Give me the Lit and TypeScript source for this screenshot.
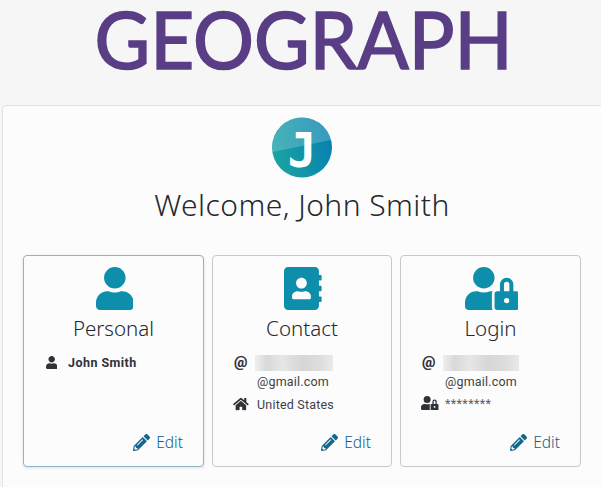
import { LitElement, html, css, svg } from "lit";
import { customElement } from "lit/decorators.js";

const USER = svg`<path d="M224 256c70.7 0 128-57.3 128-128S294.7 0 224 0 96 57.3 96 128s57.3 128 128 128zm89.6 32h-16.7c-22.2 10.2-46.9 16-72.9 16s-50.6-5.8-72.9-16h-16.7C60.2 288 0 348.2 0 422.4V464c0 26.5 21.5 48 48 48h352c26.5 0 48-21.5 48-48v-41.6c0-74.2-60.2-134.4-134.4-134.4z"/>`;
const BOOK = svg`<path d="M436 160c6.6 0 12-5.4 12-12v-40c0-6.6-5.4-12-12-12h-20V48c0-26.5-21.5-48-48-48H48C21.5 0 0 21.5 0 48v416c0 26.5 21.5 48 48 48h320c26.5 0 48-21.5 48-48v-48h20c6.6 0 12-5.4 12-12v-40c0-6.6-5.4-12-12-12h-20v-64h20c6.6 0 12-5.4 12-12v-40c0-6.6-5.4-12-12-12h-20v-64h20zm-228-32c35.3 0 64 28.7 64 64s-28.7 64-64 64-64-28.7-64-64 28.7-64 64-64zm112 236.8c0 10.6-10 19.2-22.4 19.2H118.4C106 384 96 375.4 96 364.8v-19.2c0-31.8 30.1-57.6 67.2-57.6h5c12.3 5.1 25.7 8 39.8 8s27.6-2.9 39.8-8h5c37.1 0 67.2 25.8 67.2 57.6v19.2z"/>`;
const LOCK = svg`<path d="M224 256A128 128 0 1 0 96 128a128 128 0 0 0 128 128zm96 64a63.08 63.08 0 0 1 8.1-30.5c-4.8-.5-9.5-1.5-14.5-1.5h-16.7a174.08 174.08 0 0 1-145.8 0h-16.7A134.43 134.43 0 0 0 0 422.4V464a48 48 0 0 0 48 48h280.9a63.54 63.54 0 0 1-8.9-32zm288-32h-32v-80a80 80 0 0 0-160 0v80h-32a32 32 0 0 0-32 32v160a32 32 0 0 0 32 32h224a32 32 0 0 0 32-32V320a32 32 0 0 0-32-32zM496 432a32 32 0 1 1 32-32 32 32 0 0 1-32 32zm32-144h-64v-80a32 32 0 0 1 64 0z"/>`;
const PENCIL = svg`<path d="M497.9 142.1l-46.1 46.1c-4.7 4.7-12.3 4.7-17 0l-111-111c-4.7-4.7-4.7-12.3 0-17l46.1-46.1c18.7-18.7 49.1-18.7 67.9 0l60.1 60.1c18.8 18.7 18.8 49.1 0 67.9zM284.2 99.8L21.6 362.4.4 483.9c-2.9 16.4 11.4 30.6 27.8 27.8l121.5-21.3 262.6-262.6c4.7-4.7 4.7-12.3 0-17l-111-111c-4.8-4.7-12.4-4.7-17.1 0zM124.1 339.9c-5.5-5.5-5.5-14.3 0-19.8l154-154c5.5-5.5 14.3-5.5 19.8 0s5.5 14.3 0 19.8l-154 154c-5.5 5.5-14.3 5.5-19.8 0zM88 424h48v36.3l-64.5 11.3-31.1-31.1L51.7 376H88v48z"/>`;
const HOME = svg`<path d="M280.37 148.26L96 300.11V464a16 16 0 0 0 16 16l112.06-.29a16 16 0 0 0 15.92-16V368a16 16 0 0 1 16-16h64a16 16 0 0 1 16 16v95.64a16 16 0 0 0 16 16.05L464 480a16 16 0 0 0 16-16V300L295.67 148.26a12.19 12.19 0 0 0-15.3 0zM571.6 251.47L488 182.56V44.05a12 12 0 0 0-12-12h-56a12 12 0 0 0-12 12v72.61L318.47 43a48 48 0 0 0-61 0L4.34 251.47a12 12 0 0 0-1.6 16.9l25.5 31A12 12 0 0 0 45.15 301l235.22-193.74a12.19 12.19 0 0 1 15.3 0L530.9 301a12 12 0 0 0 16.9-1.6l25.5-31a12 12 0 0 0-1.7-16.93z"/>`;

const icon = (vb: string, p: unknown, cls: string) =>
  html`<svg class=${cls} viewBox=${vb} aria-hidden="true">${p}</svg>`;

@customElement("app-root")
export class AppRoot extends LitElement {
  static styles = css`
    :host {
      display: block;
      height: 487px;
      overflow: hidden;
      background: #f6f6f6;
      font-family: Roboto, sans-serif;
      color: #2f3338;
    }
    .logo {
      height: 105px;
      display: flex;
      justify-content: center;
      padding-left: 7px;
      box-sizing: border-box;
      font-family: Lato, sans-serif;
      font-weight: 400;
      font-size: 80px;
      line-height: 76px;
      color: #5a3e85;
      -webkit-text-stroke: 1.7px #5a3e85;
    }
    .logo span {
      display: block;
      height: 76px;
      transform: scaleX(0.952);
      transform-origin: center;
    }
    .panel {
      margin-left: 2px;
      width: 610px;
      height: 400px;
      box-sizing: border-box;
      background: #fcfcfc;
      border: 1px solid #e2e2e2;
      border-radius: 4px;
      padding: 11px 0 0 20px;
    }
    .inner {
      width: 558px;
      display: flex;
      flex-direction: column;
      align-items: center;
    }
    .avatar {
      width: 60px;
      height: 61px;
      display: block;
    }
    h1 {
      margin: 8px 0 0;
      font-family: "Noto Sans", sans-serif;
      font-weight: 300;
      font-size: 30px;
      letter-spacing: 0.45px;
      line-height: 38px;
      color: #24282d;
    }
    .cards {
      margin-top: 31px;
      width: 100%;
      display: grid;
      grid-template-columns: 181px 180px 181px;
      gap: 8px;
    }
    .card {
      height: 212px;
      box-sizing: border-box;
      border: 1px solid #c9c9c9;
      border-radius: 4px;
      padding: 11px 20px 14px 22px;
      display: flex;
      flex-direction: column;
      background: #fcfcfc;
    }
    .card.active {
      border-color: #8fb6c8;
      box-shadow: 0 1px 3px rgba(0, 0, 0, 0.12);
    }
    .big {
      height: 43px;
      align-self: center;
      fill: #0d8fab;
      display: block;
    }
    h2 {
      margin: 4px 0 0 -2px;
      text-align: center;
      font-family: "Noto Sans", sans-serif;
      font-weight: 300;
      font-size: 20.5px;
      line-height: 28px;
      color: #24282d;
    }
    .rows {
      margin-top: 11px;
      display: flex;
      flex-direction: column;
      font-size: 12.5px;
      letter-spacing: 0.2px;
      color: #3d4147;
    }
    .row {
      display: flex;
      align-items: center;
      min-height: 18px;
    }
    .ic {
      width: 22px;
      flex: none;
      display: flex;
      align-items: center;
    }
    .ic svg {
      fill: #2f3338;
      height: 13px;
      display: block;
    }
    .ic svg.wide {
      height: 14px;
      margin-left: -2px;
    }
    .at {
      font-weight: 900;
      font-size: 15px;
      line-height: 18px;
      letter-spacing: 0;
      margin-left: -1px;
      color: #2f3338;
    }
    .name {
      font-weight: 700;
      font-size: 12.5px;
      letter-spacing: 0.45px;
      color: #2f3338;
    }
    .blur {
      height: 16px;
      margin: 2px 0 0 -2px;
      background: linear-gradient(90deg, #efefef, #d9d9d9 15%, #e6e6e6 35%, #d6d6d6 60%, #dedede 85%, #eaeaea);
    }
    .sub {
      margin: 2px 0 0 22px;
      line-height: 18px;
    }
    .spaced {
      margin-top: 4px;
    }
    .tight {
      margin-top: 3px;
    }
    .stars {
      color: #5a5e64;
      letter-spacing: 0.4px;
    }
    .edit {
      margin-top: auto;
      align-self: flex-end;
      display: flex;
      align-items: center;
      gap: 6px;
      color: #0f5f85;
      font-family: "Noto Sans", sans-serif;
      font-size: 15.5px;
      font-weight: 300;
      line-height: 20px;
    }
    .edit svg {
      height: 17px;
      fill: #14688f;
      display: block;
    }
  `;

  private edit() {
    return html`<div class="edit">${icon("0 0 512 512", PENCIL, "")}Edit</div>`;
  }

  render() {
    return html`
      <div class="logo"><span>GEOGRAPH</span></div>
      <div class="panel">
        <div class="inner">
          <svg class="avatar" viewBox="0 0 60 61" aria-hidden="true">
            <defs>
              <linearGradient id="g" x1="0" y1="0.6" x2="1" y2="0.3">
                <stop offset="0" stop-color="#1ba3a3"></stop>
                <stop offset="1" stop-color="#0680b0"></stop>
              </linearGradient>
            </defs>
            <circle cx="30" cy="30.5" r="30" fill="url(#g)"></circle>
            <path d="M0.5 35 L59 23 A30 30 0 0 0 30 0.5 A30 30 0 0 0 0.5 35 Z" fill="#fff" fill-opacity="0.2"></path>
            <text x="30" y="50" text-anchor="middle" font-family="'DejaVu Sans Mono', monospace" font-weight="700" font-size="48" fill="#fff">J</text>
          </svg>
          <h1>Welcome, John Smith</h1>
          <div class="cards">
            <div class="card active">
              ${icon("0 0 448 512", USER, "big")}
              <h2>Personal</h2>
              <div class="rows">
                <div class="row">
                  <span class="ic">${icon("0 0 448 512", USER, "")}</span>
                  <span class="name">John Smith</span>
                </div>
              </div>
              ${this.edit()}
            </div>
            <div class="card">
              ${icon("0 0 448 512", BOOK, "big")}
              <h2>Contact</h2>
              <div class="rows">
                <div class="row">
                  <span class="ic"><span class="at">@</span></span>
                  <div class="blur" style="width:78px"></div>
                </div>
                <div class="sub">@gmail.com</div>
                <div class="row spaced">
                  <span class="ic">${icon("0 0 576 512", HOME, "wide")}</span>
                  <span>United States</span>
                </div>
              </div>
              ${this.edit()}
            </div>
            <div class="card">
              ${icon("0 0 640 512", LOCK, "big")}
              <h2>Login</h2>
              <div class="rows">
                <div class="row">
                  <span class="ic"><span class="at">@</span></span>
                  <div class="blur" style="width:76px"></div>
                </div>
                <div class="sub">@gmail.com</div>
                <div class="row tight">
                  <span class="ic">${icon("0 0 640 512", LOCK, "wide")}</span>
                  <span class="stars">********</span>
                </div>
              </div>
              ${this.edit()}
            </div>
          </div>
        </div>
      </div>
    `;
  }
}
